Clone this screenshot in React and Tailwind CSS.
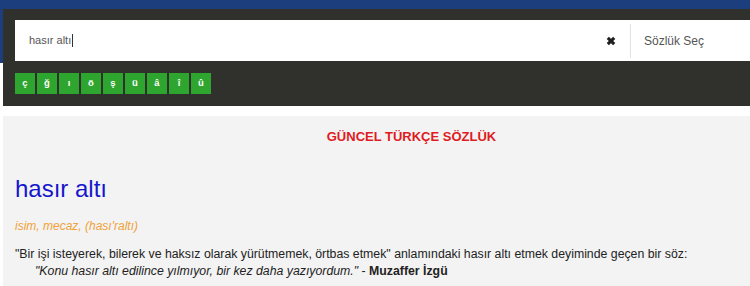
import React from "react";

const harfler = ["ç", "ğ", "ı", "ö", "ş", "ü", "â", "î", "û"];

const App = () => {
  return (
    <div className="h-[286px] w-full overflow-hidden bg-white font-['Liberation_Sans',Arial,sans-serif]">
      <div className="w-[820px]">
        <div className="h-[63px] bg-[#1d3e7c]" />

        {/* arama paneli */}
        <div className="-mt-[54px] ml-[3px] h-[97px] bg-[#30312c] px-[12px] pt-[11px]">
          <div className="flex h-[41px] items-center bg-white">
            <div className="flex flex-1 items-center pl-[14px] text-[11px] text-[#555]">
              hasır altı
              <span className="ml-px h-[13px] w-px bg-[#333]" />
            </div>
            <svg
              viewBox="0 0 10 10"
              className="mr-[14px] h-[10px] w-[10px]"
              fill="none"
              stroke="#1f1f1f"
              strokeWidth="3.1"
            >
              <path d="M1.8 1.8 L8.2 8.2 M8.2 1.8 L1.8 8.2" />
            </svg>
            <div className="h-[34px] w-px bg-[#e2e2e2]" />
            <div className="w-[177px] pl-[13px] text-[12px] text-[#555]">
              Sözlük Seç
            </div>
          </div>

          <div className="mt-[12px] flex gap-[2px]">
            {harfler.map((h) => (
              <button
                key={h}
                type="button"
                className="flex h-[21px] w-[20px] items-center justify-center bg-[#2ea52e] text-[9.5px] font-semibold text-white"
              >
                {h}
              </button>
            ))}
          </div>
        </div>

        {/* sonuç */}
        <div className="ml-[3px] mt-[10px] h-[200px] bg-[#f3f3f3] px-[12px] pt-[13px]">
          <h2 className="text-center text-[13px] font-bold leading-[16px] text-[#e01b22]">
            GÜNCEL TÜRKÇE SÖZLÜK
          </h2>
          <h1 className="mt-[29px] text-[24px] leading-[30px] text-[#1616cc]">
            hasır altı
          </h1>
          <p className="mt-[14px] text-[12px] italic leading-[16px] text-[#f0a23a]">
            isim, mecaz, (hası'raltı)
          </p>
          <div className="mt-[12px] text-[12.3px] leading-[17px] text-[#222]">
            <p>
              "Bir işi isteyerek, bilerek ve haksız olarak yürütmemek, örtbas
              etmek" anlamındaki hasır altı etmek deyiminde geçen bir söz:
            </p>
            <p className="pl-[20px]">
              <i>
                "Konu hasır altı edilince yılmıyor, bir kez daha yazıyordum."
              </i>{" "}
              - <b>Muzaffer İzgü</b>
            </p>
          </div>
        </div>
      </div>
    </div>
  );
};

export default App;
